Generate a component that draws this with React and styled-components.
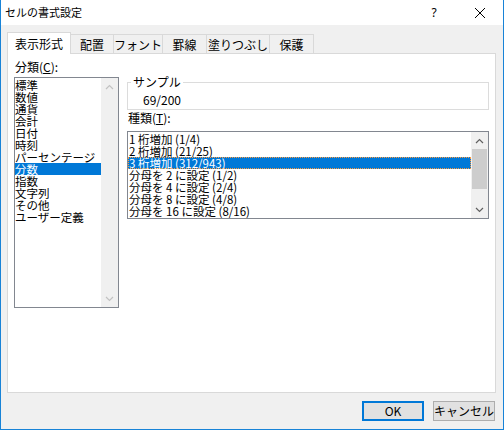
import React from "react";
import styled, { createGlobalStyle } from "styled-components";

const Global = createGlobalStyle`
  html, body { margin: 0; padding: 0; background: #ffffff; }
  body { font-family: "Noto Sans CJK JP", "Noto Sans", sans-serif; font-size: 12px; color: #000; }
  * { box-sizing: border-box; }
`;

const Window = styled.div`
  width: 504px;
  height: 430px;
  border: 1px solid #1883d7;
  border-top: none;
  display: flex;
  flex-direction: column;
  background: #f0f0f0;
`;

const TitleBar = styled.div`
  height: 25px;
  flex: none;
  background: #ffffff;
  display: flex;
  align-items: center;
`;

const Title = styled.div`
  flex: 1;
  padding-left: 4px;
  font-size: 11px;
  line-height: 25px;
`;

const CaptionButton = styled.div`
  width: 46px;
  height: 25px;
  display: flex;
  align-items: center;
  justify-content: center;
  font-size: 12px;
  font-family: "Noto Sans", sans-serif;
`;

const Body = styled.div`
  flex: 1;
  padding: 7px 7px 0 6px;
  display: flex;
  flex-direction: column;
`;

const TabBar = styled.div`
  display: flex;
  align-items: flex-end;
  height: 21px;
  position: relative;
  z-index: 1;
`;

const Tab = styled.div`
  width: ${(p) => p.$w}px;
  height: ${(p) => (p.$active ? 22 : 19)}px;
  margin-bottom: ${(p) => (p.$active ? -1 : 0)}px;
  margin-right: -1px;
  border: 1px solid #d9d9d9;
  border-bottom: none;
  background: ${(p) => (p.$active ? "#ffffff" : "#f0f0f0")};
  display: flex;
  align-items: center;
  justify-content: center;
  padding-top: ${(p) => (p.$active ? 0 : 1)}px;
  font-size: 12px;
  line-height: 12px;
  white-space: nowrap;
`;

const Panel = styled.div`
  height: 340px;
  border: 1px solid #d9d9d9;
  background: #ffffff;
  display: flex;
  padding: 7px 0 0 6px;
  gap: 8px;
`;

const Column = styled.div`
  display: flex;
  flex-direction: column;
  width: ${(p) => p.$w}px;
  padding-top: ${(p) => p.$top || 0}px;
`;

const Label = styled.div`
  font-size: 12px;
  line-height: 12px;
  height: 12px;
  margin-top: ${(p) => p.$mt || 0}px;
  margin-bottom: ${(p) => p.$mb || 0}px;
  padding-left: 1px;
  white-space: nowrap;
`;

const ListBox = styled.div`
  height: ${(p) => p.$h}px;
  border: 1px solid #828790;
  display: flex;
  background: #ffffff;
`;

const Items = styled.div`
  flex: 1;
  padding-top: 1px;
  display: flex;
  flex-direction: column;
  overflow: hidden;
`;

const Item = styled.div`
  height: 12px;
  line-height: 12px;
  font-size: 11.5px;
  padding-left: ${(p) => p.$pl || 0}px;
  white-space: nowrap;
  background: ${(p) => (p.$selected ? "#0078d7" : "transparent")};
  color: ${(p) => (p.$selected ? "#ffffff" : "#000000")};
  outline: ${(p) => (p.$focus ? "1px dotted #ff9a3c" : "none")};
  outline-offset: -1px;
`;

const ScrollBar = styled.div`
  width: 17px;
  flex: none;
  background: #f0f0f0;
  display: flex;
  flex-direction: column;
`;

const ArrowButton = styled.div`
  height: 17px;
  flex: none;
  display: flex;
  align-items: center;
  justify-content: center;
`;

const Track = styled.div`
  flex: 1;
  display: flex;
  flex-direction: column;
`;

const Thumb = styled.div`
  height: ${(p) => p.$h}px;
  margin: 0 1px;
  background: #cdcdcd;
`;

const Fieldset = styled.fieldset`
  margin: 0;
  padding: 6px 8px 2px 3px;
  border: 1px solid #dcdcdc;
  height: 34px;
`;

const Legend = styled.legend`
  padding: 0 2px;
  font-size: 12px;
  line-height: 12px;
`;

const SampleValue = styled.div`
  padding-left: 12px;
  font-size: 12px;
  line-height: 12px;
`;

const Footer = styled.div`
  display: flex;
  justify-content: flex-end;
  gap: 9px;
  margin-top: 8px;
  padding-right: 1px;
`;

const Button = styled.div`
  width: 62px;
  height: 20px;
  background: #e1e1e1;
  border: ${(p) => (p.$default ? "2px solid #0078d7" : "1px solid #adadad")};
  display: flex;
  align-items: center;
  justify-content: center;
  font-size: 12px;
  line-height: 12px;
  white-space: nowrap;
`;

const Chevron = ({ dir, color }) => (
  <svg width="9" height="6" viewBox="0 0 9 6">
    <path
      d={dir === "up" ? "M1 5 L4.5 1.5 L8 5" : "M1 1 L4.5 4.5 L8 1"}
      fill="none"
      stroke={color}
      strokeWidth="1.2"
    />
  </svg>
);

const Scroll = ({ disabled, thumb }) => {
  const c = disabled ? "#c2c2c2" : "#606060";
  return (
    <ScrollBar>
      <ArrowButton>
        <Chevron dir="up" color={c} />
      </ArrowButton>
      <Track>{thumb ? <Thumb $h={thumb} /> : null}</Track>
      <ArrowButton>
        <Chevron dir="down" color={c} />
      </ArrowButton>
    </ScrollBar>
  );
};

const tabs = [
  { label: "表示形式", w: 64, active: true },
  { label: "配置", w: 44 },
  { label: "フォント", w: 50 },
  { label: "罫線", w: 45 },
  { label: "塗りつぶし", w: 64 },
  { label: "保護", w: 45 },
];

const categories = [
  "標準",
  "数値",
  "通貨",
  "会計",
  "日付",
  "時刻",
  "パーセンテージ",
  "分数",
  "指数",
  "文字列",
  "その他",
  "ユーザー定義",
];

const kinds = [
  "1 桁増加 (1/4)",
  "2 桁増加 (21/25)",
  "3 桁増加 (312/943)",
  "分母を 2 に設定 (1/2)",
  "分母を 4 に設定 (2/4)",
  "分母を 8 に設定 (4/8)",
  "分母を 16 に設定 (8/16)",
];

export default function App() {
  return (
    <>
      <Global />
      <Window>
        <TitleBar>
          <Title>セルの書式設定</Title>
          <CaptionButton>?</CaptionButton>
          <CaptionButton>
            <svg width="10" height="10" viewBox="0 0 10 10">
              <path d="M0 0 L10 10 M10 0 L0 10" stroke="#000" strokeWidth="1" fill="none" />
            </svg>
          </CaptionButton>
        </TitleBar>
        <Body>
          <TabBar>
            {tabs.map((t) => (
              <Tab key={t.label} $w={t.w} $active={t.active}>
                {t.label}
              </Tab>
            ))}
          </TabBar>
          <Panel>
            <Column $w={105}>
              <Label $mb={4}>分類(<u>C</u>):</Label>
              <ListBox $h={231}>
                <Items>
                  {categories.map((c) => (
                    <Item key={c} $selected={c === "分数"}>
                      {c}
                    </Item>
                  ))}
                </Items>
                <Scroll disabled />
              </ListBox>
            </Column>
            <Column $w={362} $top={15}>
              <Fieldset>
                <Legend>サンプル</Legend>
                <SampleValue>69/200</SampleValue>
              </Fieldset>
              <Label $mt={2} $mb={7}>種類(<u>T</u>):</Label>
              <ListBox $h={88}>
                <Items>
                  {kinds.map((k, i) => (
                    <Item key={k} $pl={1} $selected={i === 2} $focus={i === 2}>
                      {k}
                    </Item>
                  ))}
                </Items>
                <Scroll thumb={40} />
              </ListBox>
            </Column>
          </Panel>
          <Footer>
            <Button $default>OK</Button>
            <Button>キャンセル</Button>
          </Footer>
        </Body>
      </Window>
    </>
  );
}
